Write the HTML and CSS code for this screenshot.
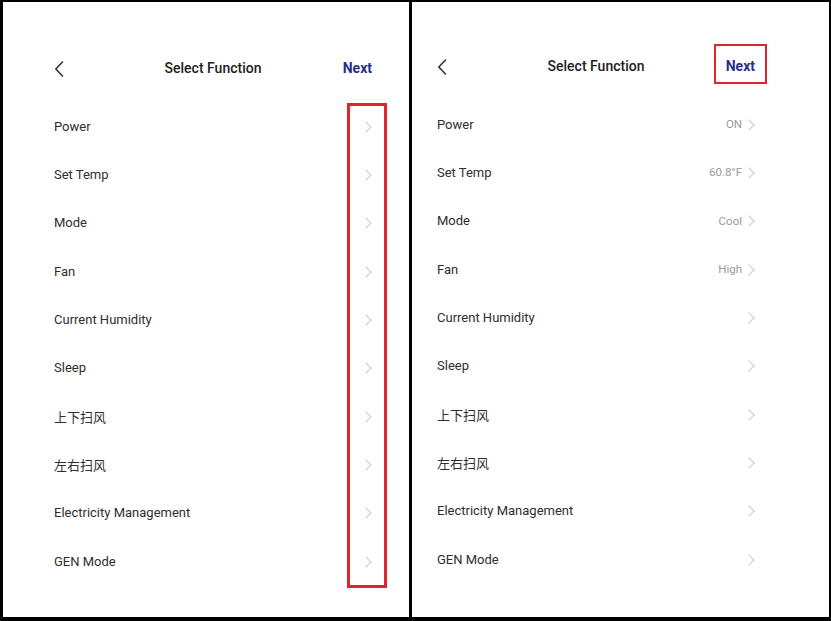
FILE: index.html
```html
<!DOCTYPE html>
<html lang="en">
<head>
    <meta charset="UTF-8">
    <meta name="viewport" content="width=device-width, initial-scale=1.0">
    <title>Select Function</title>
    <link rel="stylesheet" href="styles.css">
</head>
<body>
    <div class="frame">
        <!-- left screen: chevrons only -->
        <div class="screen screen-left">
            <div class="header">
                <span class="back"><svg width="10" height="16" viewBox="0 0 10 16"><path d="M8.5 1 L1.8 8 L8.5 15" fill="none" stroke="#333" stroke-width="1.6" stroke-linecap="round" stroke-linejoin="round"/></svg></span>
                <span class="title">Select Function</span>
                <span class="next">Next</span>
            </div>
            <div class="list">
                <div class="row"><span class="label">Power</span><span class="chev"></span></div>
                <div class="row"><span class="label">Set Temp</span><span class="chev"></span></div>
                <div class="row"><span class="label">Mode</span><span class="chev"></span></div>
                <div class="row"><span class="label">Fan</span><span class="chev"></span></div>
                <div class="row"><span class="label">Current Humidity</span><span class="chev"></span></div>
                <div class="row"><span class="label">Sleep</span><span class="chev"></span></div>
                <div class="row"><span class="label">上下扫风</span><span class="chev"></span></div>
                <div class="row"><span class="label">左右扫风</span><span class="chev"></span></div>
                <div class="row"><span class="label">Electricity Management</span><span class="chev"></span></div>
                <div class="row"><span class="label">GEN Mode</span><span class="chev"></span></div>
            </div>
            <div class="mark mark-chevrons"></div>
        </div>

        <!-- right screen: with values -->
        <div class="screen screen-right">
            <div class="header">
                <span class="back"><svg width="10" height="16" viewBox="0 0 10 16"><path d="M8.5 1 L1.8 8 L8.5 15" fill="none" stroke="#333" stroke-width="1.6" stroke-linecap="round" stroke-linejoin="round"/></svg></span>
                <span class="title">Select Function</span>
                <span class="next">Next</span>
            </div>
            <div class="list">
                <div class="row"><span class="label">Power</span><span class="value">ON</span><span class="chev"></span></div>
                <div class="row"><span class="label">Set Temp</span><span class="value">60.8°F</span><span class="chev"></span></div>
                <div class="row"><span class="label">Mode</span><span class="value">Cool</span><span class="chev"></span></div>
                <div class="row"><span class="label">Fan</span><span class="value">High</span><span class="chev"></span></div>
                <div class="row"><span class="label">Current Humidity</span><span class="chev"></span></div>
                <div class="row"><span class="label">Sleep</span><span class="chev"></span></div>
                <div class="row"><span class="label">上下扫风</span><span class="chev"></span></div>
                <div class="row"><span class="label">左右扫风</span><span class="chev"></span></div>
                <div class="row"><span class="label">Electricity Management</span><span class="chev"></span></div>
                <div class="row"><span class="label">GEN Mode</span><span class="chev"></span></div>
            </div>
            <div class="mark mark-next"></div>
        </div>
    </div>
</body>
</html>
```

FILE: styles.css
```css
/* frame */
* {
    box-sizing: border-box;
}
body {
    margin: 0;
    padding: 0;
    background: #fff;
    font-family: Roboto, "Noto Sans CJK SC", "Liberation Sans", sans-serif;
    color: #2e2e2e;
}
.frame {
    width: 831px;
    height: 621px;
    border-style: solid;
    border-color: #000;
    border-width: 2px 2px 4px 3px;
    display: flex;
}
.screen {
    position: relative;
    height: 100%;
    background: #fff;
}
.screen-left {
    width: 409px;
    flex: none;
    padding: 44px 37px 0 51px;
    border-right: 3px solid #000;
}
.screen-right {
    flex: 1;
    padding: 42px 74px 0 25px;
}

/* header */
.header {
    height: 44px;
    display: flex;
    align-items: center;
    justify-content: space-between;
}
.back {
    width: 30px;
    display: flex;
    align-items: center;
}
.back svg {
    display: block;
    margin-top: 1px;
}
.title {
    font-size: 14px;
    font-weight: 500;
    color: #222;
}
.next {
    width: 30px;
    text-align: right;
    font-size: 14px;
    font-weight: 700;
    color: #2b2d8c;
}

/* rows */
.list {
    margin-top: 12px;
}
.row {
    height: 48.33px;
    display: flex;
    align-items: center;
    font-size: 13px;
}
.label {
    flex: 1;
    color: #2e2e2e;
}
.value {
    font-size: 11.5px;
    color: #9a9a9a;
    margin-right: 6px;
}
.chev {
    width: 6px;
    height: 11px;
    position: relative;
    margin-right: 1px;
}
.chev::before {
    content: "";
    position: absolute;
    width: 7px;
    height: 7px;
    top: 2px;
    left: -3px;
    border-top: 1px solid #c8c8c8;
    border-right: 1px solid #c8c8c8;
    transform: rotate(45deg);
}

/* red annotation boxes */
.mark {
    position: absolute;
    border-style: solid;
    border-color: #e0232e;
}
.mark-chevrons {
    left: 344px;
    top: 101px;
    width: 40px;
    height: 485px;
    border-width: 3px;
}
.mark-next {
    left: 302px;
    top: 42px;
    width: 53px;
    height: 40px;
    border-width: 2px;
}
```
